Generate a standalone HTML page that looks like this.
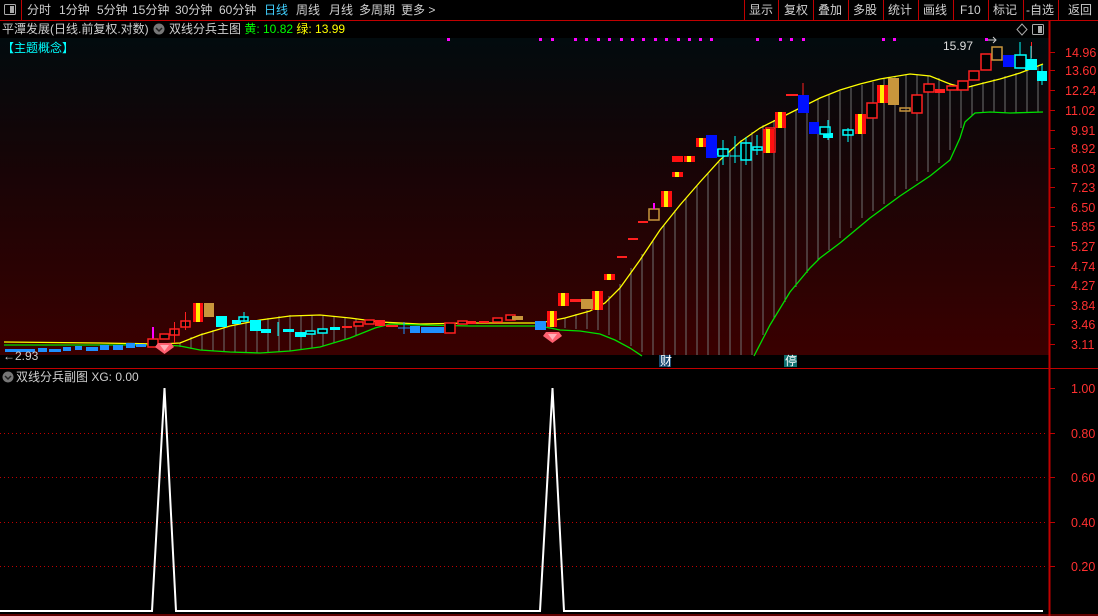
<!DOCTYPE html>
<html><head><meta charset="utf-8">
<style>
*{margin:0;padding:0;box-sizing:border-box}
body{width:1098px;height:616px;background:#000;overflow:hidden;position:relative;font-family:"Liberation Sans","Noto Sans CJK SC",sans-serif;color:#d0d0d0}
.t{position:absolute;font-size:12px;line-height:16px;white-space:nowrap}
.dv{position:absolute;top:0;width:1px;height:20px;background:#c00000}
</style></head><body>
<svg width="1098" height="616" style="position:absolute;left:0;top:0">
<defs><linearGradient id="g" x1="0" y1="0" x2="0" y2="1"><stop offset="0" stop-color="#020b0e"/><stop offset="0.35" stop-color="#140507"/><stop offset="1" stop-color="#3a0000"/></linearGradient></defs>
<rect x="0" y="38" width="1049" height="317" fill="url(#g)"/>
<line x1="0" y1="20.5" x2="1098" y2="20.5" stroke="#c00000"/>
<line x1="0" y1="368.5" x2="1098" y2="368.5" stroke="#c00000"/>
<line x1="1049.5" y1="21" x2="1049.5" y2="616" stroke="#c00000" stroke-width="2"/>
<line x1="0" y1="615" x2="1098" y2="615" stroke="#c00000"/>
<g stroke="#c00000" stroke-width="1">
<line x1="1050" y1="52.5" x2="1055" y2="52.5"/><line x1="1050" y1="70.5" x2="1055" y2="70.5"/><line x1="1050" y1="90.5" x2="1055" y2="90.5"/><line x1="1050" y1="110.5" x2="1055" y2="110.5"/><line x1="1050" y1="130.5" x2="1055" y2="130.5"/><line x1="1050" y1="148.5" x2="1055" y2="148.5"/><line x1="1050" y1="168.5" x2="1055" y2="168.5"/><line x1="1050" y1="187.5" x2="1055" y2="187.5"/><line x1="1050" y1="207.5" x2="1055" y2="207.5"/><line x1="1050" y1="226.5" x2="1055" y2="226.5"/><line x1="1050" y1="246.5" x2="1055" y2="246.5"/><line x1="1050" y1="266.5" x2="1055" y2="266.5"/><line x1="1050" y1="285.5" x2="1055" y2="285.5"/><line x1="1050" y1="305.5" x2="1055" y2="305.5"/><line x1="1050" y1="324.5" x2="1055" y2="324.5"/><line x1="1050" y1="344.5" x2="1055" y2="344.5"/>
<line x1="1050" y1="388.5" x2="1055" y2="388.5"/><line x1="1050" y1="433.5" x2="1055" y2="433.5"/><line x1="1050" y1="477.5" x2="1055" y2="477.5"/><line x1="1050" y1="522.5" x2="1055" y2="522.5"/><line x1="1050" y1="566.5" x2="1055" y2="566.5"/>
</g>
<g fill="#ff3030" font-size="12.5" font-family="Liberation Sans,sans-serif">
<text x="1065" y="57">14.96</text><text x="1065" y="75">13.60</text><text x="1065" y="95">12.24</text><text x="1065" y="115">11.02</text><text x="1071" y="135">9.91</text><text x="1071" y="153">8.92</text><text x="1071" y="173">8.03</text><text x="1071" y="192">7.23</text><text x="1071" y="212">6.50</text><text x="1071" y="231">5.85</text><text x="1071" y="251">5.27</text><text x="1071" y="271">4.74</text><text x="1071" y="290">4.27</text><text x="1071" y="310">3.84</text><text x="1071" y="329">3.46</text><text x="1071" y="349">3.11</text>
<text x="1071" y="393">1.00</text><text x="1071" y="438">0.80</text><text x="1071" y="482">0.60</text><text x="1071" y="527">0.40</text><text x="1071" y="571">0.20</text>
</g>
<g stroke="#c00000" stroke-dasharray="1,3">
<line x1="0" y1="433.5" x2="1046" y2="433.5"/><line x1="0" y1="477.5" x2="1046" y2="477.5"/><line x1="0" y1="522.5" x2="1046" y2="522.5"/><line x1="0" y1="566.5" x2="1046" y2="566.5"/>
</g>
<polyline points="0,611 152,611 164.5,388 176,611 540,611 552.5,388 564,611 1043,611" fill="none" stroke="#fff" stroke-width="2"/>
<g stroke="#707070" stroke-width="1">
<line x1="180" y1="343" x2="180" y2="347"/><line x1="191" y1="337" x2="191" y2="349"/><line x1="202" y1="333" x2="202" y2="350"/><line x1="213" y1="330" x2="213" y2="351"/><line x1="224" y1="327" x2="224" y2="352"/><line x1="235" y1="324" x2="235" y2="352"/><line x1="246" y1="322" x2="246" y2="353"/><line x1="257" y1="320" x2="257" y2="353"/><line x1="268" y1="318" x2="268" y2="353"/><line x1="279" y1="316" x2="279" y2="352"/><line x1="290" y1="315" x2="290" y2="351"/><line x1="301" y1="315" x2="301" y2="350"/><line x1="312" y1="315" x2="312" y2="348"/><line x1="323" y1="316" x2="323" y2="346"/><line x1="334" y1="317" x2="334" y2="343"/><line x1="345" y1="318" x2="345" y2="340"/><line x1="356" y1="319" x2="356" y2="336"/>
<line x1="565" y1="318" x2="565" y2="328"/><line x1="576" y1="314" x2="576" y2="329"/><line x1="587" y1="310" x2="587" y2="329"/><line x1="598" y1="305" x2="598" y2="330"/><line x1="609" y1="296" x2="609" y2="335"/><line x1="620" y1="284" x2="620" y2="340"/><line x1="631" y1="268" x2="631" y2="346"/><line x1="642" y1="254" x2="642" y2="352"/><line x1="653" y1="240" x2="653" y2="355"/><line x1="664" y1="225" x2="664" y2="355"/><line x1="675" y1="210" x2="675" y2="355"/><line x1="686" y1="198" x2="686" y2="355"/><line x1="697" y1="186" x2="697" y2="355"/><line x1="708" y1="173" x2="708" y2="355"/><line x1="719" y1="162" x2="719" y2="355"/><line x1="730" y1="150" x2="730" y2="355"/><line x1="741" y1="140" x2="741" y2="355"/><line x1="752" y1="132" x2="752" y2="355"/><line x1="763" y1="125" x2="763" y2="335"/><line x1="774" y1="120" x2="774" y2="318"/><line x1="785" y1="115" x2="785" y2="302"/><line x1="796" y1="110" x2="796" y2="287"/><line x1="807" y1="104" x2="807" y2="273"/><line x1="818" y1="99" x2="818" y2="260"/><line x1="829" y1="95" x2="829" y2="250"/><line x1="840" y1="91" x2="840" y2="238"/><line x1="851" y1="88" x2="851" y2="228"/><line x1="862" y1="85" x2="862" y2="218"/><line x1="873" y1="82" x2="873" y2="211"/><line x1="884" y1="79" x2="884" y2="204"/><line x1="895" y1="77" x2="895" y2="196"/><line x1="906" y1="75" x2="906" y2="189"/><line x1="917" y1="75" x2="917" y2="181"/><line x1="928" y1="76" x2="928" y2="172"/><line x1="939" y1="78" x2="939" y2="163"/><line x1="950" y1="83" x2="950" y2="150"/><line x1="961" y1="87" x2="961" y2="128"/><line x1="972" y1="85" x2="972" y2="116"/><line x1="983" y1="82" x2="983" y2="113"/><line x1="994" y1="79" x2="994" y2="112"/><line x1="1005" y1="76" x2="1005" y2="113"/><line x1="1016" y1="73" x2="1016" y2="113"/><line x1="1027" y1="70" x2="1027" y2="113"/><line x1="1038" y1="66" x2="1038" y2="112"/>
</g>
<polyline fill="none" stroke="#ffff00" stroke-width="1.3" points="4,342 100,343 160,344 180,343 200,335 230,326 260,320 290,316 320,315 350,318 380,322 420,324 470,323 540,323 565,318 590,311 605,303 620,288 640,260 660,230 680,205 700,182 720,160 740,142 760,128 780,118 800,108 820,98 840,90 860,84 880,79 910,74 930,76 950,84 965,88 980,84 1000,79 1020,73 1043,64"/>
<polyline fill="none" stroke="#00e000" stroke-width="1.3" points="4,345 100,345 165,345 180,346 200,350 230,352 260,353 290,351 320,347 350,338 375,328 390,324 420,325 470,326 540,326 560,330 580,331 600,334 615,340 630,348 642,356"/>
<polyline fill="none" stroke="#00e000" stroke-width="1.3" points="754,356 770,325 790,292 810,268 820,258 840,243 870,218 900,196 930,176 950,160 960,138 965,122 975,113 990,112 1010,113 1043,112"/>
<g>
<g fill="#1e90ff"><rect x="5" y="349" width="30" height="3"/><rect x="38" y="348" width="9" height="4"/><rect x="49" y="349" width="12" height="3"/><rect x="63" y="347" width="8" height="4"/><rect x="75" y="346" width="7" height="4"/><rect x="86" y="347" width="12" height="4"/><rect x="100" y="345" width="9" height="5"/><rect x="113" y="345" width="10" height="5"/><rect x="126" y="343" width="9" height="5"/><rect x="136" y="344" width="10" height="3"/></g>
<rect x="152" y="327" width="2" height="12" fill="#ff00ff"/>
<g fill="#000" stroke="#ff2020" stroke-width="1.5">
<rect x="148" y="339" width="10" height="8"/><rect x="160" y="334" width="9" height="5"/><rect x="170" y="329" width="9" height="6"/><rect x="181" y="321" width="9" height="6"/>
<rect x="354" y="322" width="9" height="4"/><rect x="365" y="320" width="9" height="4"/><rect x="445" y="323" width="10" height="10"/><rect x="458" y="321" width="9" height="3"/><rect x="493" y="318" width="9" height="4"/><rect x="506" y="315" width="9" height="5"/>
<rect x="766" y="128" width="9" height="24"/><rect x="867" y="103" width="10" height="15"/><rect x="912" y="95" width="10" height="18"/><rect x="924" y="84" width="10" height="8"/><rect x="947" y="86" width="10" height="4"/><rect x="958" y="81" width="10" height="9"/><rect x="969" y="71" width="10" height="9"/><rect x="981" y="54" width="10" height="16"/>
</g>
<g stroke="#ff2020" stroke-width="1"><line x1="185.5" y1="312" x2="185.5" y2="330"/><line x1="174.5" y1="322" x2="174.5" y2="343"/><line x1="1031.5" y1="42" x2="1031.5" y2="58"/><line x1="803" y1="83" x2="803" y2="96"/></g>
<g fill="#ff2020"><rect x="375" y="320" width="10" height="6"/><rect x="386" y="325" width="12" height="2"/><rect x="342" y="326" width="10" height="2"/><rect x="466" y="321" width="10" height="3"/><rect x="479" y="321" width="10" height="2"/><rect x="935" y="89" width="10" height="4"/><rect x="786" y="94" width="12" height="2"/><rect x="570" y="299" width="12" height="3"/>
<rect x="617" y="256" width="10" height="2"/><rect x="628" y="238" width="10" height="2"/><rect x="638" y="221" width="10" height="2"/></g>
<g fill="#ff1010"><rect x="193" y="303" width="10" height="19"/><rect x="547" y="311" width="10" height="16"/><rect x="558" y="293" width="11" height="13"/><rect x="592" y="291" width="11" height="19"/><rect x="604" y="274" width="11" height="6"/><rect x="661" y="191" width="11" height="16"/><rect x="672" y="156" width="11" height="6"/><rect x="684" y="156" width="11" height="6"/><rect x="696" y="138" width="10" height="9"/><rect x="763" y="129" width="11" height="24"/><rect x="775" y="112" width="11" height="16"/><rect x="855" y="114" width="11" height="20"/><rect x="877" y="85" width="11" height="18"/></g>
<g fill="#ffee00"><rect x="196" y="303" width="4" height="19"/><rect x="550" y="311" width="4" height="16"/><rect x="561" y="293" width="4" height="13"/><rect x="595" y="291" width="4" height="19"/><rect x="607" y="274" width="4" height="6"/><rect x="664" y="191" width="4" height="16"/><rect x="675" y="172" width="4" height="5"/><rect x="687" y="156" width="4" height="6"/><rect x="699" y="138" width="4" height="9"/><rect x="766" y="129" width="4" height="24"/><rect x="778" y="112" width="4" height="16"/><rect x="858" y="114" width="4" height="20"/><rect x="880" y="85" width="4" height="18"/></g>
<rect x="672" y="172" width="11" height="5" fill="#ff1010"/><rect x="675" y="172" width="4" height="5" fill="#ffee00"/>
<g fill="#c8963c"><rect x="204" y="303" width="10" height="14"/><rect x="512" y="316" width="11" height="4"/><rect x="581" y="299" width="12" height="10"/><rect x="888" y="78" width="11" height="27"/></g>
<g fill="none" stroke="#c8963c" stroke-width="1.5"><rect x="649" y="209" width="10" height="11"/><rect x="900" y="108" width="10" height="3"/><rect x="992" y="47" width="10" height="13"/></g>
<rect x="653" y="203" width="2" height="6" fill="#ff00ff"/>
<g fill="#00ffff"><rect x="216" y="316" width="11" height="11"/><rect x="250" y="320" width="11" height="11"/><rect x="261" y="329" width="10" height="4"/><rect x="295" y="332" width="11" height="5"/><rect x="283" y="329" width="11" height="3"/><rect x="330" y="327" width="10" height="3"/><rect x="232" y="320" width="9" height="4"/><rect x="707" y="149" width="11" height="6"/><rect x="1025" y="59" width="12" height="11"/><rect x="1037" y="71" width="10" height="10"/><rect x="823" y="133" width="10" height="5"/></g>
<g fill="#000" stroke="#00ffff" stroke-width="1.5"><rect x="239" y="317" width="9" height="4"/><rect x="306" y="331" width="9" height="3"/><rect x="318" y="329" width="9" height="4"/><rect x="718" y="149" width="10" height="7"/><rect x="741" y="143" width="10" height="17"/><rect x="753" y="147" width="9" height="3"/><rect x="820" y="127" width="10" height="7"/><rect x="843" y="130" width="10" height="5"/><rect x="1015" y="55" width="11" height="13"/></g>
<g stroke="#00ffff"><line x1="735" y1="136" x2="735" y2="163"/><line x1="730" y1="156" x2="740" y2="156"/><line x1="723" y1="140" x2="723" y2="165"/><line x1="746" y1="137" x2="746" y2="165"/><line x1="757" y1="135" x2="757" y2="155"/><line x1="1020" y1="42" x2="1020" y2="55"/><line x1="1042" y1="65" x2="1042" y2="85"/><line x1="1031" y1="46" x2="1031" y2="59"/><line x1="244" y1="312" x2="244" y2="322"/><line x1="278" y1="322" x2="278" y2="336"/><line x1="828" y1="120" x2="828" y2="140"/><line x1="848" y1="128" x2="848" y2="142"/></g>
<g fill="#0010ff"><rect x="706" y="135" width="11" height="23"/><rect x="798" y="95" width="11" height="18"/><rect x="809" y="122" width="10" height="12"/><rect x="1003" y="55" width="11" height="12"/></g>
<g fill="#1e90ff"><rect x="410" y="326" width="10" height="7"/><rect x="421" y="327" width="12" height="6"/><rect x="433" y="327" width="11" height="6"/><rect x="535" y="321" width="11" height="9"/></g>
<line x1="398" y1="328" x2="410" y2="328" stroke="#1e90ff"/><line x1="404" y1="322" x2="404" y2="334" stroke="#1e90ff"/>
</g>
<g><polygon points="158,343 171,343 174,347 164.5,354 155,347" fill="#ff6070"/><polygon points="160,345 169,345 164.5,351" fill="#ffb0b8"/>
<polygon points="546,332 559,332 562,336 552.5,343 543,336" fill="#ff6070"/><polygon points="548,334 557,334 552.5,340" fill="#ffb0b8"/></g>
<g fill="#ff00ff"><rect x="447" y="38" width="3" height="3"/><rect x="539" y="38" width="3" height="3"/><rect x="551" y="38" width="3" height="3"/><rect x="574" y="38" width="3" height="3"/><rect x="585" y="38" width="3" height="3"/><rect x="597" y="38" width="3" height="3"/><rect x="608" y="38" width="3" height="3"/><rect x="620" y="38" width="3" height="3"/><rect x="631" y="38" width="3" height="3"/><rect x="642" y="38" width="3" height="3"/><rect x="654" y="38" width="3" height="3"/><rect x="665" y="38" width="3" height="3"/><rect x="677" y="38" width="3" height="3"/><rect x="688" y="38" width="3" height="3"/><rect x="699" y="38" width="3" height="3"/><rect x="710" y="38" width="3" height="3"/><rect x="756" y="38" width="3" height="3"/><rect x="779" y="38" width="3" height="3"/><rect x="790" y="38" width="3" height="3"/><rect x="802" y="38" width="3" height="3"/><rect x="882" y="38" width="3" height="3"/><rect x="893" y="38" width="3" height="3"/><rect x="985" y="38" width="3" height="3"/></g>
<rect x="4.5" y="4.5" width="11" height="10" fill="none" stroke="#aaa" rx="1"/><rect x="10" y="6" width="4" height="7" fill="#aaa"/>
<rect x="1032.5" y="24.5" width="11" height="10" fill="none" stroke="#aaa" rx="1"/><rect x="1038" y="26" width="4" height="7" fill="#aaa"/>
<polygon points="1022,24 1027,29.5 1022,35 1017,29.5" fill="none" stroke="#aaa"/>
<circle cx="159" cy="29" r="5.5" fill="#777"/><polyline points="156,28 159,31 162,28" fill="none" stroke="#222" stroke-width="1.5"/>
<circle cx="8" cy="377" r="5.5" fill="#777"/><polyline points="5,376 8,379 11,376" fill="none" stroke="#222" stroke-width="1.5"/>
<rect x="659" y="355" width="12" height="12" fill="#1a4a70"/><rect x="784" y="355" width="13" height="12" fill="#107070"/>
<path d="M988 40 L996 40 M993 37 L996 40 L993 43" stroke="#ccc" fill="none"/>
</svg>
<div class="dv" style="left:21px"></div>
<div class="t" style="left:27px;top:2px">分时</div>
<div class="t" style="left:59px;top:2px">1分钟</div>
<div class="t" style="left:97px;top:2px">5分钟</div>
<div class="t" style="left:132px;top:2px">15分钟</div>
<div class="t" style="left:175px;top:2px">30分钟</div>
<div class="t" style="left:219px;top:2px">60分钟</div>
<div class="t" style="left:264px;top:2px;color:#40d0ff">日线</div>
<div class="t" style="left:296px;top:2px">周线</div>
<div class="t" style="left:329px;top:2px">月线</div>
<div class="t" style="left:359px;top:2px">多周期</div>
<div class="t" style="left:401px;top:2px">更多 &gt;</div>
<div class="dv" style="left:744px"></div><div class="dv" style="left:778px"></div><div class="dv" style="left:813px"></div><div class="dv" style="left:848px"></div><div class="dv" style="left:883px"></div><div class="dv" style="left:918px"></div><div class="dv" style="left:953px"></div><div class="dv" style="left:988px"></div><div class="dv" style="left:1023px"></div><div class="dv" style="left:1058px"></div>
<div class="t" style="left:749px;top:2px">显示</div>
<div class="t" style="left:784px;top:2px">复权</div>
<div class="t" style="left:818px;top:2px">叠加</div>
<div class="t" style="left:853px;top:2px">多股</div>
<div class="t" style="left:888px;top:2px">统计</div>
<div class="t" style="left:923px;top:2px">画线</div>
<div class="t" style="left:960px;top:2px">F10</div>
<div class="t" style="left:993px;top:2px">标记</div>
<div class="t" style="left:1026px;top:2px">-自选</div>
<div class="t" style="left:1068px;top:2px">返回</div>
<div class="t" style="left:2px;top:21px">平潭发展(日线.前复权.对数)</div>
<div class="t" style="left:169px;top:21px">双线分兵主图 <span style="color:#00ff00">黄: 10.82</span> <span style="color:#ffff00">绿: 13.99</span></div>
<div class="t" style="left:2px;top:40px;color:#00ffff">【主题概念】</div>
<div class="t" style="left:943px;top:38px;color:#ddd">15.97</div>
<div class="t" style="left:3px;top:348px;color:#ccc">&larr;2.93</div>
<div class="t" style="left:660px;top:353px;color:#fff">财</div>
<div class="t" style="left:785px;top:353px;color:#fff">停</div>
<div class="t" style="left:16px;top:369px">双线分兵副图 XG: 0.00</div>
</body></html>
